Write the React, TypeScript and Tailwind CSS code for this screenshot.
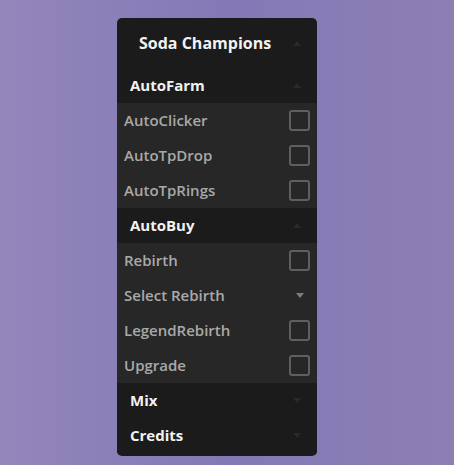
import React from "react";

const font = { fontFamily: '"Open Sans", "Noto Sans", sans-serif' };

function Tri({ up, cls }: { up?: boolean; cls: string }) {
  return (
    <svg width="8" height="5" viewBox="0 0 8 5" className={cls}>
      {up ? <polygon points="4,0 8,5 0,5" fill="currentColor" /> : <polygon points="0,0 8,0 4,5" fill="currentColor" />}
    </svg>
  );
}

function Header({ label, up }: { label: string; up?: boolean }) {
  return (
    <div className="flex h-[35px] items-center justify-between bg-[#1b1b1b] pl-[13px] pr-[16px]">
      <span className="text-[15px] font-bold text-[#f2f2f2]">{label}</span>
      <Tri up={up} cls="text-[#2a2a2a]" />
    </div>
  );
}

function Toggle({ label }: { label: string }) {
  return (
    <div className="flex h-[35px] items-center justify-between bg-[#272727] pl-[7px] pr-[7px]">
      <span className="text-[15px] font-semibold text-[#a9a9a9]">{label}</span>
      <div className="h-[21px] w-[21px] rounded-[3px] border-2 border-[#5f5f5f]" />
    </div>
  );
}

function Dropdown({ label }: { label: string }) {
  return (
    <div className="flex h-[35px] items-center justify-between bg-[#272727] pl-[7px] pr-[13px]">
      <span className="text-[15px] font-semibold text-[#a9a9a9]">{label}</span>
      <Tri cls="text-[#7d7d7d]" />
    </div>
  );
}

export default function App() {
  return (
    <div
      className="h-[465px] w-[454px] bg-gradient-to-r from-[#9386bb] via-[#8479b6] to-[#8c7fb4] pt-[18px]"
      style={font}
    >
      <div className="ml-[117px] flex w-[200px] flex-col overflow-hidden rounded-[5px] bg-[#1b1b1b] pb-[3px]">
        <div className="flex h-[50px] items-center justify-between pl-[22px] pr-[16px]">
          <span className="text-[16px] font-bold text-[#f2f2f2]">Soda Champions</span>
          <Tri up cls="text-[#2a2a2a]" />
        </div>
        <Header label="AutoFarm" up />
        <Toggle label="AutoClicker" />
        <Toggle label="AutoTpDrop" />
        <Toggle label="AutoTpRings" />
        <Header label="AutoBuy" up />
        <Toggle label="Rebirth" />
        <Dropdown label="Select Rebirth" />
        <Toggle label="LegendRebirth" />
        <Toggle label="Upgrade" />
        <Header label="Mix" />
        <Header label="Credits" />
      </div>
    </div>
  );
}
